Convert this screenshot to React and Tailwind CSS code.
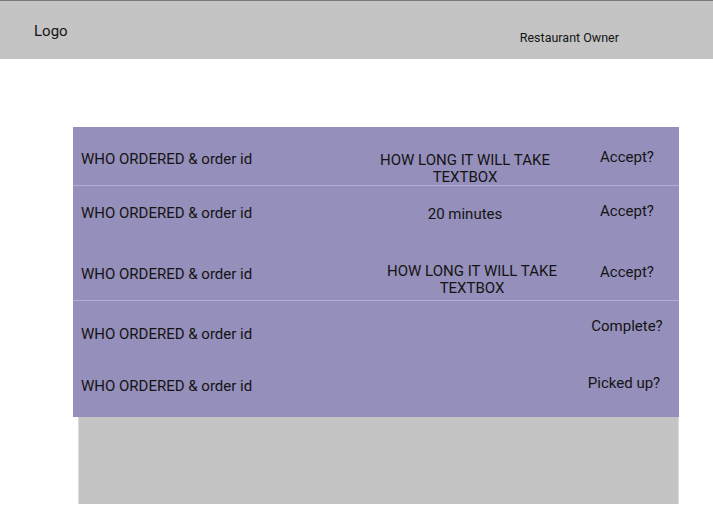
import React from 'react';

const rows = [
  {
    who: 'pt-[24px]',
    mid: 'HOW LONG IT WILL TAKE TEXTBOX',
    midCls: 'pt-[25px] px-[20px]',
    action: 'Accept?',
    actCls: 'pt-[22px]',
    h: 'h-[59px]',
    border: 'border-b border-[#b3afd0]',
  },
  {
    who: 'pt-[19px]',
    mid: '20 minutes',
    midCls: 'pt-[20px] px-[20px]',
    action: 'Accept?',
    actCls: 'pt-[17px]',
    h: 'h-[56px]',
    border: '',
  },
  {
    who: 'pt-[24px]',
    mid: 'HOW LONG IT WILL TAKE TEXTBOX',
    midCls: 'pt-[21px] pl-[27px] pr-[13px]',
    action: 'Accept?',
    actCls: 'pt-[22px]',
    h: 'h-[59px]',
    border: 'border-b border-[#b3afd0]',
  },
  {
    who: 'pt-[25px]',
    mid: '',
    midCls: '',
    action: 'Complete?',
    actCls: 'pt-[17px]',
    h: 'h-[58px]',
    border: '',
  },
  {
    who: 'pt-[19px]',
    mid: '',
    midCls: '',
    action: 'Picked up?',
    actCls: 'pt-[16px] pr-[6px]',
    h: 'h-[58px]',
    border: '',
  },
];

export default function App() {
  return (
    <div className="w-[713px] h-[511px] bg-white font-['Roboto',sans-serif] text-[#141414] overflow-hidden">
      {/* header */}
      <div className="h-[59px] bg-[#c4c4c4] border-t border-[#7a7a7a] flex items-start justify-between">
        <div className="pl-[34px] pt-[21px] text-[15px] leading-[18px]">Logo</div>
        <div className="pr-[94px] pt-[29px] text-[12.5px] leading-[15px]">Restaurant Owner</div>
      </div>

      <div className="pt-[68px] pl-[73px]">
        {/* orders list */}
        <div className="w-[606px] bg-[#958fbb] text-[15px] leading-[17px]">
          {rows.map((r, i) => (
            <div key={i} className={`grid grid-cols-[282px_220px_104px] ${r.h} ${r.border}`}>
              <div className={`pl-[8px] ${r.who}`}>WHO ORDERED &amp; order id</div>
              <div className={`text-center ${r.midCls}`}>{r.mid}</div>
              <div className={`text-center ${r.actCls}`}>{r.action}</div>
            </div>
          ))}
        </div>
        <div className="ml-[5px] w-[601px] h-[87px] bg-[#c4c4c4] border-l border-r border-[#dcdcdc]" />
      </div>
    </div>
  );
}
